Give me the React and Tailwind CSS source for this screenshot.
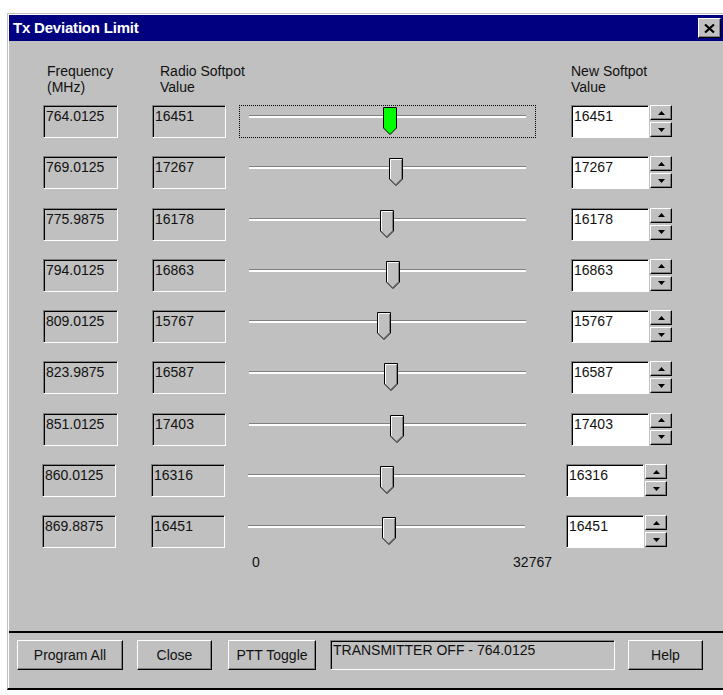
import React from 'react';

// Softpot rows as shown in the dialog
const ROWS = [
  { freq: '764.0125', radio: '16451', value: 16451, focus: true },
  { freq: '769.0125', radio: '17267', value: 17267 },
  { freq: '775.9875', radio: '16178', value: 16178 },
  { freq: '794.0125', radio: '16863', value: 16863 },
  { freq: '809.0125', radio: '15767', value: 15767 },
  { freq: '823.9875', radio: '16587', value: 16587 },
  { freq: '851.0125', radio: '17403', value: 17403 },
  { freq: '860.0125', radio: '16316', value: 16316, shifted: true },
  { freq: '869.8875', radio: '16451', value: 16451, shifted: true },
];

const MAX = 32767;

const sunken =
  'border border-t-[#808080] border-l-[#808080] border-r-white border-b-white shadow-[inset_1px_1px_0_#000]';
const raised =
  'border border-t-white border-l-white border-r-black border-b-black shadow-[inset_-1px_-1px_0_#808080]';

function Thumb({ green, left }) {
  return (
    <svg
      width="14"
      height="28"
      viewBox="0 0 14 28"
      className="absolute top-[1px]"
      style={{ left }}
    >
      <polygon
        points="0.5,0.5 13.5,0.5 13.5,21 7,27.5 0.5,21"
        fill={green ? '#00ff00' : '#c0c0c0'}
        stroke="#000"
        strokeWidth="1"
        strokeLinejoin="round"
      />
      {!green && (
        <>
          <polyline points="1.5,21 1.5,1.5 12.5,1.5" fill="none" stroke="#fff" strokeWidth="1" />
          <polyline points="12.5,2 12.5,20.6 7,26" fill="none" stroke="#808080" strokeWidth="1" />
        </>
      )}
    </svg>
  );
}

function Slider({ value, focus }) {
  const left = 17 + (value / MAX) * 264 - 7;
  return (
    <div
      className={`relative ml-[13px] h-[33px] w-[297px] border border-dotted ${
        focus ? 'border-black' : 'border-transparent'
      }`}
    >
      <div className="mx-[9px] mt-[9px] h-[3px] border-t border-[#808080] bg-white" />
      <Thumb green={focus} left={left} />
    </div>
  );
}

function Arrow({ up }) {
  return (
    <svg width="7" height="4" viewBox="0 0 7 4">
      <polygon points={up ? '3.5,0 7,4 0,4' : '0,0 7,0 3.5,4'} fill="#000" />
    </svg>
  );
}

function Spinner() {
  return (
    <div className="ml-[1px] flex w-[22px] flex-col gap-[2px]">
      <div className={`${raised} flex h-[15px] items-center justify-center bg-[#c0c0c0]`}>
        <Arrow up />
      </div>
      <div className={`${raised} flex h-[15px] items-center justify-center bg-[#c0c0c0]`}>
        <Arrow />
      </div>
    </div>
  );
}

function Row({ row }) {
  return (
    <div className="flex h-[33px] items-start">
      <div
        className={`${sunken} h-[33px] bg-[#c0c0c0] pl-[2px] pt-[2px] leading-[16px] ${
          row.shifted ? 'w-[74px]' : 'ml-[1px] w-[75px]'
        }`}
      >
        {row.freq}
      </div>
      <div
        className={`${sunken} h-[33px] w-[74px] bg-[#c0c0c0] pl-[2px] pt-[2px] leading-[16px] ${
          row.shifted ? 'ml-[35px]' : 'ml-[34px]'
        }`}
      >
        {row.radio}
      </div>
      <Slider value={row.value} focus={row.focus} />
      <div className={`flex items-start ${row.shifted ? 'ml-[31px]' : 'ml-[35px]'}`}>
        <div className={`${sunken} h-[33px] w-[78px] bg-white pl-[2px] pt-[2px] leading-[16px]`}>
          {row.value}
        </div>
        <Spinner />
      </div>
    </div>
  );
}

function Button({ children, w }) {
  return (
    <div className={`${raised} flex h-[30px] items-center justify-center bg-[#c0c0c0] ${w}`}>
      {children}
    </div>
  );
}

export default function App() {
  return (
    <div
      className="h-[695px] w-[723px] overflow-hidden bg-white pl-[7px] pt-[13px] text-[14px] text-[#111]"
      style={{ fontFamily: '"Liberation Sans", Arial, sans-serif' }}
    >
      {/* window frame */}
      <div className="h-[677px] w-[716px] border-l border-t border-b-2 border-l-[#c0c0c0] border-t-[#c0c0c0] border-b-black">
        <div className="flex h-full flex-col border-l border-t border-white bg-[#c0c0c0]">
          {/* title bar */}
          <div className="flex h-[26px] items-center justify-between bg-[#000080] pl-[4px] pr-[2px]">
            <span className="text-[15px] font-bold tracking-[-0.2px] text-white">Tx Deviation Limit</span>
            <div className={`${raised} flex h-[20px] w-[23px] items-center justify-center bg-[#c0c0c0]`}>
              <svg width="11" height="9" viewBox="0 0 11 9">
                <path d="M1 0.5 L10 8.5 M10 0.5 L1 8.5" stroke="#000" strokeWidth="2.2" />
              </svg>
            </div>
          </div>

          {/* body */}
          <div className="h-[590px] pl-[33px] pt-[22px]">
            <div className="flex leading-[16px]">
              <div className="ml-[1px] w-[75px] pl-[4px]">
                Frequency
                <br />
                (MHz)
              </div>
              <div className="ml-[34px] w-[74px] whitespace-nowrap pl-[8px]">
                Radio Softpot
                <br />
                Value
              </div>
              <div className="ml-[13px] w-[297px]" />
              <div className="ml-[35px] whitespace-nowrap">
                New Softpot
                <br />
                Value
              </div>
            </div>

            <div className="mt-[10px] flex flex-col gap-[18.3px]">
              {ROWS.map((row) => (
                <Row key={row.freq} row={row} />
              ))}
            </div>

            <div className="ml-[197px] mt-[6px] flex w-[313px] justify-between pl-[13px] leading-[16px]">
              <span>0</span>
              <span>32767</span>
            </div>
          </div>

          {/* footer */}
          <div className="h-[2px] bg-black" />
          <div className="flex flex-1 items-start pl-[8px] pt-[7px]">
            <Button w="w-[106px]">Program All</Button>
            <div className="ml-[14px]">
              <Button w="w-[75px]">Close</Button>
            </div>
            <div className="ml-[16px]">
              <Button w="w-[88px]">PTT Toggle</Button>
            </div>
            <div className={`${sunken} ml-[14px] h-[30px] w-[285px] bg-[#c0c0c0] pl-[2px] pt-[1px] leading-[16px]`}>
              TRANSMITTER OFF - 764.0125
            </div>
            <div className="ml-[13px]">
              <Button w="w-[75px]">Help</Button>
            </div>
          </div>
        </div>
      </div>
    </div>
  );
}
